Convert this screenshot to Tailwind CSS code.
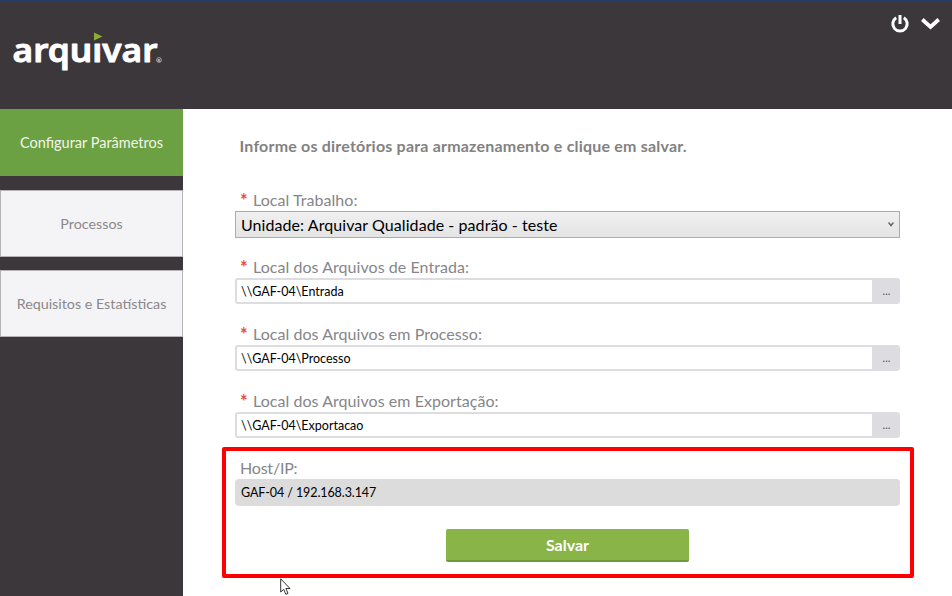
<!DOCTYPE html>
<html lang="pt-BR">
<head>
<meta charset="utf-8">
<title>Arquivar</title>
<script src="https://cdn.jsdelivr.net/npm/@tailwindcss/browser@4"></script>
</head>
<body class="relative flex h-[596px] w-[952px] flex-col overflow-hidden bg-[#3c373b] font-[Lato,'Noto_Sans',sans-serif]">
<header class="flex h-[109px] shrink-0 items-start justify-between border-t-2 border-[#273d68] bg-[#3c373b]">
  <svg class="ml-2 mt-[18px] overflow-visible" width="160" height="64" viewBox="8 20 160 64">
    <text x="12.500" y="62" font-size="33" font-weight="600" font-family="'Noto Sans',sans-serif" fill="#fff" stroke="#fff" stroke-width=".9" stroke-linejoin="round" textLength="145" lengthAdjust="spacingAndGlyphs">arquivar</text>
    <rect x="90" y="31" width="17" height="11.500" fill="#3c373b"/>
    <path d="M94 32.500L102.500 36.500L94 40.500Z" fill="#8faa35"/>
    <circle cx="159" cy="60" r="2.400" fill="none" stroke="#c8c5c8" stroke-width=".7"/>
    <text x="157.500" y="61.700" font-size="4.500" fill="#eee">R</text>
  </svg>
  <div class="mr-[12px] mt-[12px] flex items-center gap-[10px]">
    <svg width="20" height="20" viewBox="0 0 20 20" fill="none" stroke="#fff" stroke-width="3"><path d="M6.200 3.800A7.200 7.200 0 1 0 13.800 3.800M10 1V10"/></svg>
    <svg width="20" height="20" viewBox="0 0 20 20" fill="none" stroke="#fff" stroke-width="3.800"><path d="M2.300 5.500L10.500 13L18.700 5.500"/></svg>
  </div>
</header>
<div class="flex min-h-0 flex-1">
  <nav class="flex w-[183px] shrink-0 flex-col text-[14px] text-[#8a888b]">
    <button class="h-[67px] bg-[#6ba143] pt-px text-[14.500px] text-[#f3f5e9]">Configurar Parâmetros</button>
    <button class="mt-[14px] h-[67px] border border-[#b5b3b8] bg-[#f4f3f6] pt-px text-[14.300px]">Processos</button>
    <button class="mt-[13px] h-[67px] border border-[#b5b3b8] bg-[#f4f3f6] pt-px text-[14.300px]">Requisitos e Estatísticas</button>
  </nav>
  <main class="flex flex-1 flex-col bg-white pl-[52px] pr-[52px] text-[16px] text-[#86868a]">
    <h1 class="h-[62px] pl-[4.500px] pt-[26px] text-[16px] leading-[22px] font-bold tracking-[0.200px] whitespace-nowrap text-[#828282]">Informe os diretórios para armazenamento e clique em salvar.</h1>
    <section class="h-[67px]">
      <label class="flex h-[40px] items-end gap-[5px] pl-[5px] leading-[22px] tracking-[0.050px]"><span class="w-[8px] text-[18px] font-bold text-[#f04a32]">*</span>Local Trabalho:</label>
      <div class="flex h-[27px] items-center justify-between border border-[#acacac] bg-linear-to-b from-[#f0f0f0] to-[#e4e4e4] pl-[5px] pr-[5px] text-black"><span class="tracking-[0.070px]">Unidade: Arquivar Qualidade - padrão - teste</span>
        <svg width="6" height="5" viewBox="0 0 6 5" fill="none" stroke="#666" stroke-width="1.500"><path d="M.5 .5L3 3.500L5.500 .5"/></svg></div>
    </section>
    <section class="h-[67px]">
      <label class="flex h-[40px] items-end gap-[5px] pl-[5px] leading-[22px] tracking-[0.050px]"><span class="w-[8px] text-[18px] font-bold text-[#f04a32]">*</span>Local dos Arquivos de Entrada:</label>
      <div class="flex h-[26px] overflow-hidden rounded-[3px] border-2 border-[#dddce1] text-[12.500px] text-black"><span class="flex-1 pl-[4px] leading-[24px]">\\GAF-04\Entrada</span><button class="w-[26px] bg-[#dddce1] pl-[3px] pt-px text-[11px] text-[#555]">...</button></div>
    </section>
    <section class="h-[67px]">
      <label class="flex h-[40px] items-end gap-[5px] pl-[5px] leading-[22px] tracking-[0.050px]"><span class="w-[8px] text-[18px] font-bold text-[#f04a32]">*</span>Local dos Arquivos em Processo:</label>
      <div class="flex h-[26px] overflow-hidden rounded-[3px] border-2 border-[#dddce1] text-[12.500px] text-black"><span class="flex-1 pl-[4px] leading-[24px]">\\GAF-04\Processo</span><button class="w-[26px] bg-[#dddce1] pl-[3px] pt-px text-[11px] text-[#555]">...</button></div>
    </section>
    <section class="h-[67px]">
      <label class="flex h-[40px] items-end gap-[5px] pl-[5px] leading-[22px] tracking-[0.050px]"><span class="w-[8px] text-[18px] font-bold text-[#f04a32]">*</span>Local dos Arquivos em Exportação:</label>
      <div class="flex h-[26px] overflow-hidden rounded-[3px] border-2 border-[#dddce1] text-[12.500px] text-black"><span class="flex-1 pl-[4px] leading-[24px]">\\GAF-04\Exportacao</span><button class="w-[26px] bg-[#dddce1] pl-[3px] pt-px text-[11px] text-[#555]">...</button></div>
    </section>
    <section class="h-[67px]">
      <label class="flex h-[40px] items-end pl-[5px] leading-[22px] tracking-[-0.200px]">Host/IP:</label>
      <div class="h-[27px] rounded-[4px] bg-[#dcdcdc] pl-[6px] text-[12.500px] leading-[28px] tracking-[-0.080px] text-black">GAF-04 / 192.168.3.147</div>
    </section>
    <button class="ml-[211px] mt-[23px] h-[33px] w-[243px] rounded-[2px] border-b-2 border-[#6d983e] bg-[#89b548] text-[16px] font-bold text-white">Salvar</button>
  </main>
</div>
<div class="pointer-events-none absolute left-[222px] top-[447px] h-[131px] w-[692px] rounded-[2px] border-4 border-[#fe0000]"></div>
<svg class="absolute left-[280px] top-[578px]" width="12" height="18" viewBox="0 0 12 18"><path d="M.7 .8V14L3.700 11.300L5.800 16.300L8 15.400L5.900 10.500H10Z" fill="#fff" stroke="#333" stroke-width="1"/></svg>
</body>
</html>
